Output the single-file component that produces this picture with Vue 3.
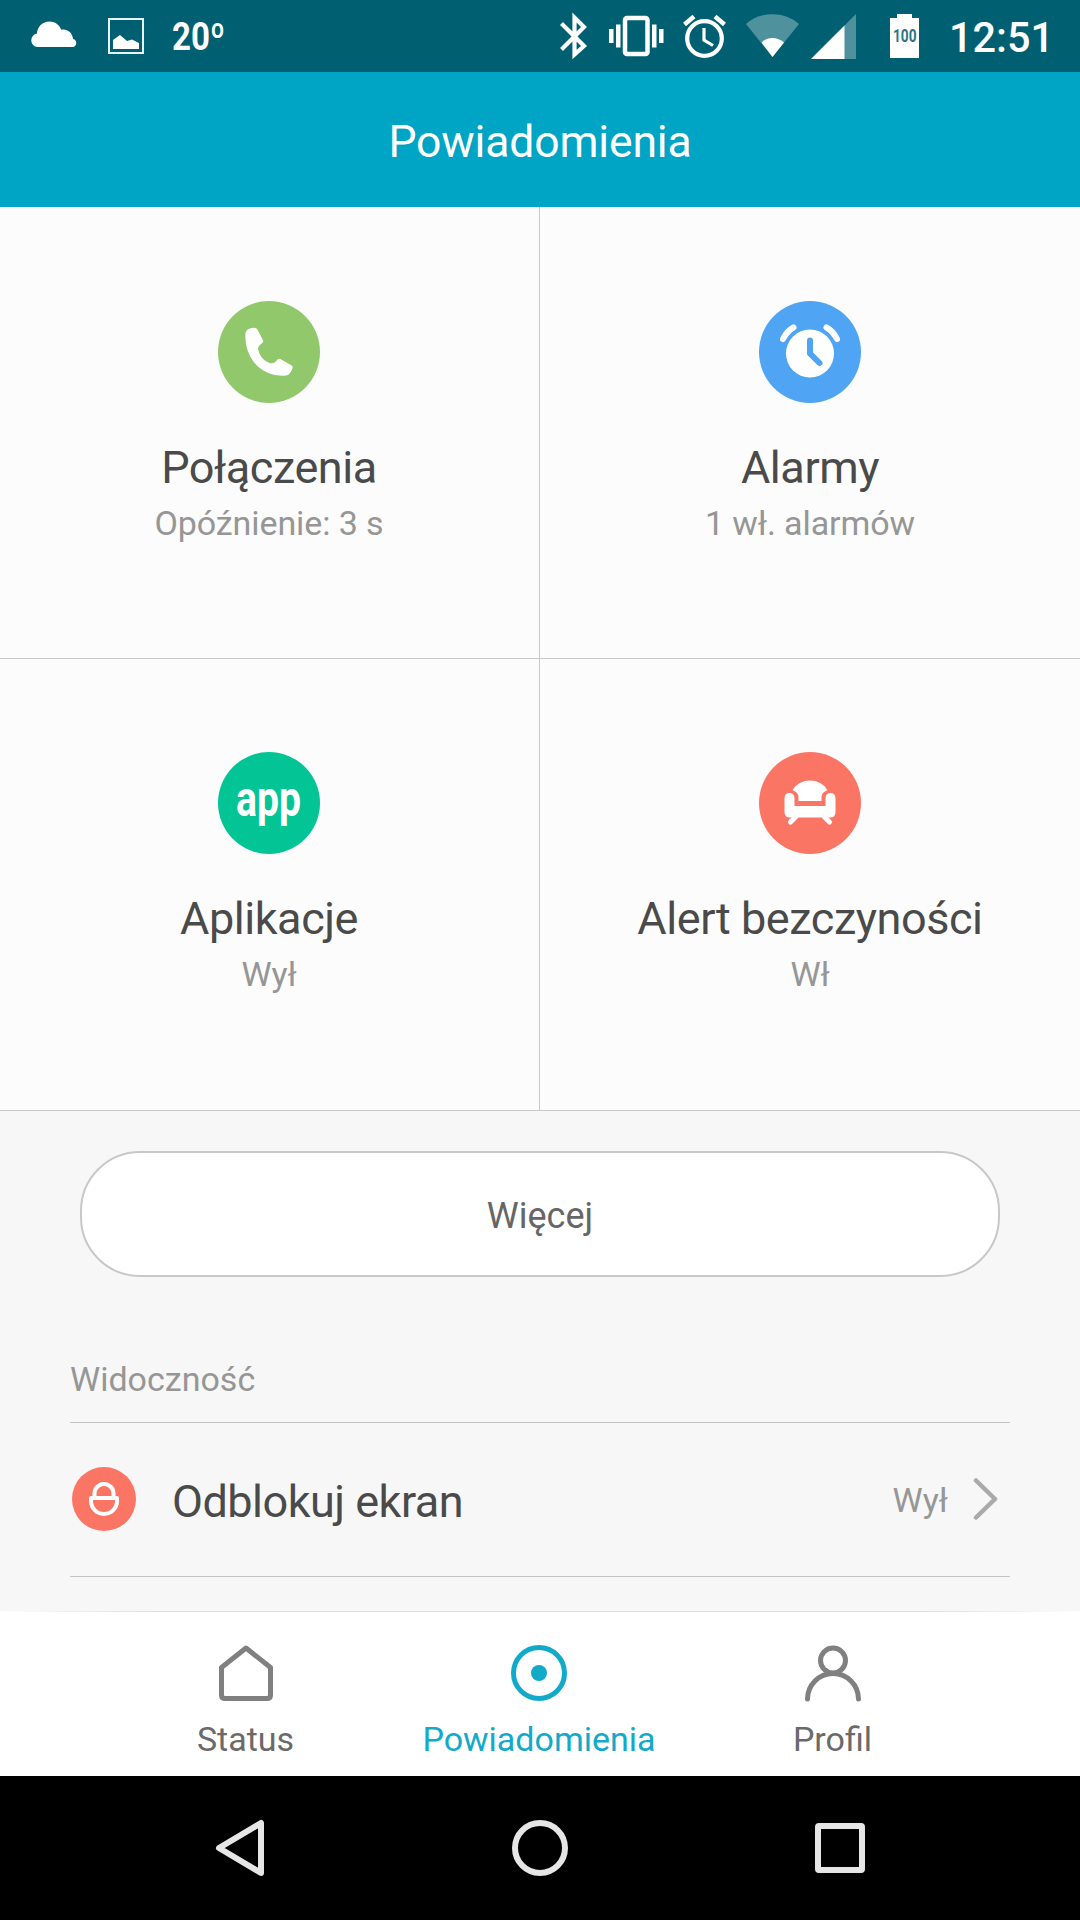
<template>
  <div class="screen">
    <div class="status-bar">
      <svg class="status-left" width="260" height="72" viewBox="0 0 260 72">
        <path
          fill="#fff"
          d="M37.500 47a6.800 6.800 0 0 1-.5-13.500c.2-6.500 5.500-12 12.500-12 5.500 0 9.800 3.200 11.800 8.200 5.500-1.200 11 2.300 11.800 9.300a4.200 4.200 0 0 1 .4 8z"
        />
        <rect x="109" y="19" width="34" height="34" fill="none" stroke="#e8f5f7" stroke-width="2" />
        <path fill="#fff" d="M113 49V40l7-5 7 6 5-1.500 7 3.500v6z" />
        <text class="temp" x="172" y="50" textLength="53" lengthAdjust="spacingAndGlyphs">20º</text>
      </svg>
      <svg class="status-right" width="540" height="72" viewBox="540 0 540 72">
        <!-- bluetooth -->
        <path d="M561.500 23.500L584 46 574.500 54.500V17.500L584 27 561.500 49.500" fill="none" stroke="#fff" stroke-width="4.200" />
        <!-- vibrate -->
        <g fill="#fff">
          <rect x="609" y="29" width="4.500" height="14" />
          <rect x="616" y="24.500" width="4.500" height="23" />
          <rect x="652" y="24.500" width="4.500" height="23" />
          <rect x="659" y="29" width="4.500" height="14" />
        </g>
        <rect x="625" y="18" width="22.500" height="36" rx="2" fill="none" stroke="#fff" stroke-width="4.500" />
        <!-- alarm -->
        <g fill="none" stroke="#fff">
          <circle cx="704.500" cy="38.500" r="17.300" stroke-width="4.200" />
          <path d="M704 28v12l9 5.500" stroke-width="3.200" />
          <path d="M684.500 24.500l9.500-8M724.500 24.500l-9.500-8" stroke-width="4.500" />
        </g>
        <!-- wifi -->
        <path fill="#4f919d" d="M772.500 57L746 24q11-9.700 26.500-9.700T799 24z" />
        <path fill="#fff" d="M772.500 57l-11-14.500q4.500-4.500 11-4.500t11.500 4.500z" />
        <!-- signal -->
        <path fill="#4f919d" d="M811 59l45-45v45z" />
        <path fill="#fff" d="M811 59l33.500-33.500V59z" />
        <!-- battery -->
        <path fill="#fff" d="M890 18h7v-4h15v4h7v40h-29z" />
        <text class="battery" x="893" y="42" textLength="23.500" lengthAdjust="spacingAndGlyphs">100</text>
        <text class="clock" x="949" y="52" textLength="105" lengthAdjust="spacingAndGlyphs">12:51</text>
      </svg>
    </div>

    <header class="header">Powiadomienia</header>

    <main class="content">
      <div class="grid">
        <div v-for="tile in tiles" :key="tile.title" class="tile">
          <svg class="tile-icon" width="102" height="102" viewBox="0 0 102 102">
            <circle cx="51" cy="51" r="51" :fill="tile.color" />
            <path
              v-if="tile.icon === 'phone'"
              fill="#fff"
              d="M29.500 28.500q4.500-2.500 8-1.500 1.500.5 2 1.700l5.500 10.500q.7 1.500-.4 2.500-4.600 3-4.600 6.300 2 10 11.500 14 4.500 1.500 7.800-3.200 1.300-1.800 3-.8l11 6.300q2 1.200 1.200 3-1.500 4.500-4 6.400-2 1-5 1.100-18 0-29.200-13-9.300-12-9-27.800.1-3.700 2.200-5.500z"
            />
            <g v-else-if="tile.icon === 'alarm'" fill="none" stroke-linecap="round" stroke-linejoin="round">
              <circle cx="51" cy="52.500" r="24" fill="#fff" />
              <path d="M51 39.500v13l9.500 9.500" :stroke="tile.color" stroke-width="6" />
              <path d="M24 38q4-8 10.500-11.500M78 38q-4-8-10.500-11.500" stroke="#fff" stroke-width="6" />
            </g>
            <text
              v-else-if="tile.icon === 'app'"
              class="app-text"
              x="18"
              y="64"
              textLength="65"
              lengthAdjust="spacingAndGlyphs"
            >app</text>
            <g v-else fill="#fff">
              <path d="M33.500 38q6-9.500 17.500-9.500T68.500 38q-6 2.500-6 7v4h-23v-4q0-4.500-6-7z" />
              <path d="M25.500 46.500q0-5.500 5-5.500t5 5.500V54h31v-7.500q0-5.500 5-5.500t5 5.500V60q0 5.500-5.500 5.500H31q-5.500 0-5.500-5.500z" />
              <path d="M37 64.500l-5.500 5.500M65 64.500l5.500 5.500" stroke="#fff" stroke-width="5" stroke-linecap="round" />
            </g>
          </svg>
          <div class="tile-title">{{ tile.title }}</div>
          <div class="tile-sub">{{ tile.sub }}</div>
        </div>
      </div>

      <button class="more-btn">Więcej</button>

      <section class="visibility">
        <div class="section-title">Widoczność</div>
        <div class="row">
          <svg class="row-icon" width="64" height="64" viewBox="0 0 64 64">
            <circle cx="32" cy="32" r="32" fill="#fb7565" />
            <g fill="none" stroke="#fff" stroke-width="4" stroke-linejoin="round">
              <path d="M22.500 31v-4.500a9.500 9.500 0 0 1 19 0V31" />
              <path d="M19 31h26v3a13 13 0 0 1-26 0z" />
            </g>
          </svg>
          <span class="row-label">Odblokuj ekran</span>
          <span class="row-value">Wył</span>
          <svg class="chevron" width="26" height="44" viewBox="0 0 26 44">
            <path d="M3 3.500L22 22 3 40.500" fill="none" stroke="#aaa" stroke-width="4.500" stroke-linecap="round" stroke-linejoin="round" />
          </svg>
        </div>
      </section>
    </main>

    <nav class="tabs">
      <div
        v-for="tab in tabs"
        :key="tab.name"
        class="tab"
        :class="{ active: tab.name === activeTab }"
        @click="activeTab = tab.name"
      >
        <svg width="60" height="60" viewBox="0 0 60 60" fill="none" stroke="currentColor" stroke-width="5">
          <path v-if="tab.icon === 'home'" d="M30 5L54.500 24.500V52q0 3.500-3.500 3.500H9Q5.500 55.500 5.500 52V24.500z" stroke-linejoin="round" />
          <template v-else-if="tab.icon === 'target'">
            <circle cx="30" cy="30" r="25.500" />
            <circle cx="30" cy="30" r="8" fill="currentColor" stroke="none" />
          </template>
          <template v-else>
            <circle cx="30" cy="17.500" r="12.500" />
            <path d="M4.500 56a25.500 25.500 0 0 1 51 0" stroke-linecap="round" />
          </template>
        </svg>
        <span>{{ tab.name }}</span>
      </div>
    </nav>

    <div class="android-nav">
      <svg width="60" height="60" viewBox="0 0 60 60">
        <path d="M51 5v50L9 30z" />
      </svg>
      <svg width="60" height="60" viewBox="0 0 60 60">
        <circle cx="30" cy="30" r="25" />
      </svg>
      <svg width="60" height="60" viewBox="0 0 60 60">
        <rect x="8" y="8" width="44" height="44" rx="1" />
      </svg>
    </div>
  </div>
</template>

<script setup>
import { ref } from 'vue';

const tiles = [
  { title: 'Połączenia', sub: 'Opóźnienie: 3 s', icon: 'phone', color: '#92c86c' },
  { title: 'Alarmy', sub: '1 wł. alarmów', icon: 'alarm', color: '#4fa4f3' },
  { title: 'Aplikacje', sub: 'Wył', icon: 'app', color: '#03c495' },
  { title: 'Alert bezczyności', sub: 'Wł', icon: 'sofa', color: '#fb7565' }
];

const tabs = [
  { name: 'Status', icon: 'home' },
  { name: 'Powiadomienia', icon: 'target' },
  { name: 'Profil', icon: 'user' }
];

const activeTab = ref('Powiadomienia');
</script>

<style>
body {
  margin: 0;
}
</style>

<style scoped>
.screen {
  width: 1080px;
  height: 1920px;
  display: flex;
  flex-direction: column;
  overflow: hidden;
  background: #f7f7f7;
  font-family: Roboto, sans-serif;
}

.status-bar {
  display: flex;
  justify-content: space-between;
  height: 72px;
  flex-shrink: 0;
  background: #006072;
}

.temp {
  font-size: 38px;
  font-weight: 700;
  fill: #fff;
}

.battery {
  font-size: 18px;
  font-weight: 700;
  fill: #2d7583;
}

.clock {
  font-size: 43px;
  font-weight: 500;
  fill: #fff;
}

.header {
  height: 135px;
  line-height: 140px;
  flex-shrink: 0;
  background: #00a4c4;
  color: #fff;
  font-size: 44.5px;
  letter-spacing: -0.15px;
  text-align: center;
}

.content {
  flex: 1;
  min-height: 0;
  overflow: hidden;
}

.grid {
  display: grid;
  grid-template-columns: 1fr 1fr;
  grid-auto-rows: 452px;
}

.tile {
  display: flex;
  flex-direction: column;
  align-items: center;
  box-sizing: border-box;
  padding-top: 94px;
  background: #fcfcfc;
  border-bottom: 1px solid #c9c9c9;
}

.tile:nth-child(odd) {
  padding-right: 1px;
  border-right: 1px solid #c9c9c9;
}

.tile:nth-child(n + 3) {
  padding-top: 93px;
}

.tile-icon {
  flex-shrink: 0;
}

.tile-title {
  margin-top: 38px;
  line-height: 54px;
  font-size: 45px;
  letter-spacing: -0.45px;
  color: #4a4a4a;
}

.tile-sub {
  margin-top: 8px;
  line-height: 40px;
  font-size: 34px;
  letter-spacing: -0.1px;
  color: #969696;
}

.app-text {
  font-size: 50px;
  font-weight: 700;
  fill: #fff;
}

.more-btn {
  display: block;
  box-sizing: border-box;
  width: 920px;
  height: 126px;
  margin: 40px auto 0;
  padding: 4px 0 0;
  border: 2px solid #c8c8c8;
  border-radius: 60px;
  background: #fff;
  color: #666;
  font-family: inherit;
  font-size: 36px;
}

.visibility {
  margin: 82px 70px 0;
}

.section-title {
  height: 63px;
  line-height: 40px;
  font-size: 34px;
  color: #969696;
  border-bottom: 1px solid #c4c4c4;
}

.row {
  display: flex;
  align-items: center;
  box-sizing: border-box;
  height: 154px;
  padding: 0 11px 2px 2px;
  border-bottom: 1px solid #c4c4c4;
}

.row-label {
  margin-left: 36px;
  padding-top: 5px;
  font-size: 45px;
  letter-spacing: -0.5px;
  color: #4a4a4a;
}

.row-value {
  margin-left: auto;
  padding-top: 2px;
  font-size: 34px;
  color: #969696;
}

.chevron {
  margin-left: 25px;
}

.tabs {
  display: flex;
  justify-content: center;
  height: 165px;
  padding-right: 2px;
  flex-shrink: 0;
  background: linear-gradient(90deg, #fff, #dedede 14%, #dedede 86%, #fff) top / 100% 1px no-repeat #fff;
}

.tab {
  display: flex;
  flex-direction: column;
  align-items: center;
  width: 293.500px;
  padding-top: 32px;
  color: #808080;
  cursor: pointer;
}

.tab span {
  margin-top: 16px;
  line-height: 40px;
  font-size: 34px;
  color: #6a6a6a;
}

.tab.active,
.tab.active span {
  color: #12aac8;
}

.android-nav {
  display: flex;
  justify-content: center;
  align-items: center;
  gap: 240px;
  height: 144px;
  flex-shrink: 0;
  background: #000;
}

.android-nav svg {
  fill: none;
  stroke: #e6e6e6;
  stroke-width: 6;
  stroke-linejoin: round;
}
</style>
